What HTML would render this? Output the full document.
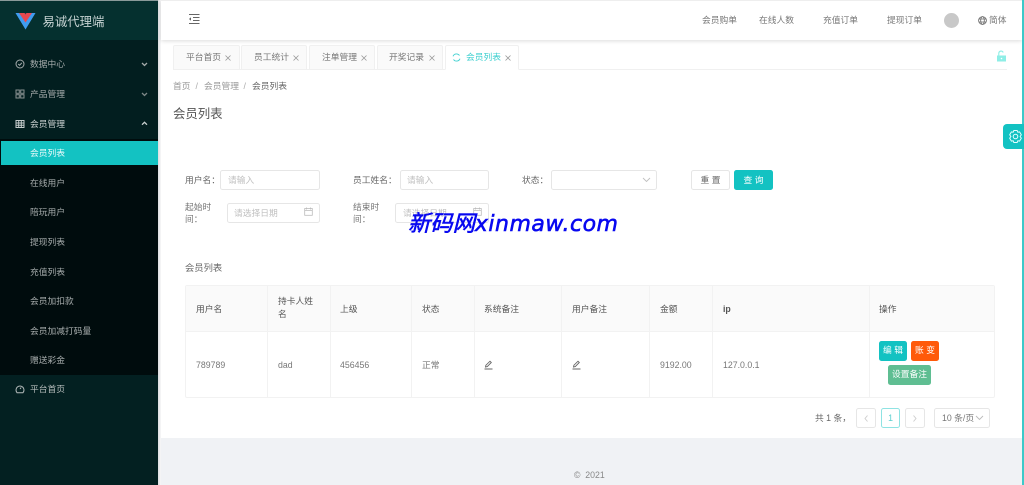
<!DOCTYPE html>
<html lang="zh"><head><meta charset="utf-8"><title>会员列表</title>
<style>
html,body{margin:0;padding:0;width:1024px;height:485px;overflow:hidden;background:#fff}
*{box-sizing:border-box}
body{font-family:"Liberation Sans","Noto Sans CJK SC",sans-serif;font-size:8.75px;color:#666}
#w{position:absolute;left:0;top:0;width:1024px;height:485px;overflow:hidden;filter:blur(.35px)}
#w div,#w svg{position:absolute}
.t{line-height:14px;height:14px;white-space:nowrap}
.m{left:30px;color:#a5abab}
.b{border:1px solid #e6e6e6;border-radius:2.5px;background:#fff}
.p{color:#c0c0c0}
.tab{top:45px;height:25px;background:#fafafa;border:1px solid #f0f0f0;border-bottom:1px solid #f0f0f0;border-radius:2px 2px 0 0}
.th{top:302px;color:#555}
.td{top:358px;color:#777}
.v{width:1px;background:#f2f2f2;top:285px;height:113px}
.btn{border-radius:2.5px;color:#fff;text-align:center;line-height:19px}
.ic{fill:none;stroke:#a5abab;stroke-width:1}
</style></head><body>
<div id="w">
<div style="left:0;top:0;width:158px;height:485px;background:#032021"></div>
<div style="left:0;top:0;width:158px;height:40px;background:#05302f"></div>
<div style="left:0;top:40px;width:158px;height:99px;background:#021e1f"></div>
<div style="left:0;top:139px;width:158px;height:236px;background:#000c0d"></div>
<div style="left:1px;top:141px;width:157px;height:24px;background:#13c2c2"></div>
<div style="left:158px;top:0;width:3px;height:485px;background:linear-gradient(90deg,#dcdde0,#f8f8f9)"></div>
<div style="left:0;top:0;width:158px;height:1px;background:#8a9a9a"></div>

<svg style="left:15px;top:13px" width="21" height="17" viewBox="0 0 21 17"><path d="M.5 0H20.500L10.500 16.500z" fill="#3f9cf0"/><path d="M4 0h13l-6.500 9.500z" fill="#e8484f"/><path d="M9.500 0h2l-1 1.500z" fill="#2b3d55"/></svg>
<div class="t" style="left:42.500px;top:15px;font-size:12.400px;color:#c6d2d2">易诚代理端</div>

<svg class="ic" style="left:15px;top:59px" width="10" height="10" viewBox="0 0 10 10"><circle cx="5" cy="5" r="4"/><path d="M3.200 5l1.400 1.300 2.200-2.500"/></svg>
<div class="t m" style="top:57px">数据中心</div>
<svg class="ic" style="left:140px;top:62px;stroke-width:1.300" width="9" height="5" viewBox="0 0 9 5"><path d="M2 1l2.500 2.500L7 1"/></svg>
<svg class="ic" style="left:15px;top:89px;stroke:#8a9292" width="10" height="10" viewBox="0 0 10 10"><rect x="1" y="1" width="3.300" height="3.300"/><rect x="5.700" y="1" width="3.300" height="3.300"/><rect x="1" y="5.700" width="3.300" height="3.300"/><rect x="5.700" y="5.700" width="3.300" height="3.300"/></svg>
<div class="t m" style="top:87px">产品管理</div>
<svg class="ic" style="left:140px;top:92px;stroke-width:1.300;stroke:#7f8888" width="9" height="5" viewBox="0 0 9 5"><path d="M2 1l2.500 2.500L7 1"/></svg>
<svg class="ic" style="left:15px;top:119px;stroke:#c5cccc" width="10" height="10" viewBox="0 0 10 10"><rect x="1" y="1.500" width="8" height="7"/><path d="M1 4h8M1 6.300h8M3.700 1.500v7M6.300 1.500v7"/></svg>
<div class="t m" style="top:117px;color:#ccd2d2">会员管理</div>
<svg class="ic" style="left:140px;top:121px;stroke-width:1.300;stroke:#ccd2d2" width="9" height="5" viewBox="0 0 9 5"><path d="M2 3.700l2.500-2.400L7 3.700"/></svg>

<div class="t m" style="top:146px;color:#e8fafa">会员列表</div>
<div class="t m" style="top:176px">在线用户</div>
<div class="t m" style="top:205px">陪玩用户</div>
<div class="t m" style="top:235px">提现列表</div>
<div class="t m" style="top:265px">充值列表</div>
<div class="t m" style="top:294px">会员加扣款</div>
<div class="t m" style="top:324px">会员加减打码量</div>
<div class="t m" style="top:353px">赠送彩金</div>
<svg class="ic" style="left:15px;top:384px;stroke:#b5bcbc" width="10" height="10" viewBox="0 0 10 10"><path d="M2 8.700A4 4 0 1 1 8 8.700z"/><path d="M5 5l1.200-1.500"/></svg>
<div class="t m" style="top:382px;color:#b5bbbb">平台首页</div>

<div style="left:161px;top:0;width:861px;height:40px;background:#fff;box-shadow:0 1px 4px rgba(0,0,0,.14)"></div>
<div style="left:161px;top:0;width:861px;height:1px;background:#eee"></div>
<svg style="left:188px;top:13px" width="12" height="12" viewBox="0 0 12 12" fill="none" stroke="#666" stroke-width="1"><path d="M1 1.500h10.500M5 4.500h6.500M5 7.500h6.500M1 10.500h10.500"/><path d="M3 4.300L1 6l2 1.700z" fill="#666" stroke="none"/></svg>

<div class="t" style="left:702px;top:13px;color:#777">会员购单</div>
<div class="t" style="left:759px;top:13px;color:#777">在线人数</div>
<div class="t" style="left:823px;top:13px;color:#777">充值订单</div>
<div class="t" style="left:887px;top:13px;color:#777">提现订单</div>
<div style="left:944px;top:13px;width:15px;height:15px;border-radius:50%;background:#c8c8c8"></div>
<svg style="left:978px;top:16px" width="9" height="9" viewBox="0 0 9 9" fill="none" stroke="#666" stroke-width=".8"><circle cx="4.500" cy="4.500" r="3.900"/><ellipse cx="4.500" cy="4.500" rx="1.800" ry="3.900"/><path d="M.6 3h7.800M.6 6h7.800"/></svg>
<div class="t" style="left:989px;top:13px;color:#777">简体</div>

<div class="tab" style="left:173px;width:67px"></div>
<div class="tab" style="left:241px;width:66px"></div>
<div class="tab" style="left:309px;width:66px"></div>
<div class="tab" style="left:377px;width:66px"></div>
<div style="left:173px;top:69px;width:834px;height:1px;background:#f0f0f0"></div>
<div class="tab" style="left:445px;width:74px;background:#fff;border-bottom-color:#fff"></div>
<div class="t" style="left:186px;top:50px;color:#777">平台首页</div>
<div class="t" style="left:254px;top:50px;color:#777">员工统计</div>
<div class="t" style="left:322px;top:50px;color:#777">注单管理</div>
<div class="t" style="left:389px;top:50px;color:#777">开奖记录</div>
<div class="t" style="left:466px;top:50px;color:#3fd0d0">会员列表</div>
<svg style="left:225px;top:55px" width="6" height="6" viewBox="0 0 6 6" stroke="#999" stroke-width=".8"><path d="M.5.5l5 5M5.500.5l-5 5"/></svg>
<svg style="left:293px;top:55px" width="6" height="6" viewBox="0 0 6 6" stroke="#999" stroke-width=".8"><path d="M.5.5l5 5M5.500.5l-5 5"/></svg>
<svg style="left:361px;top:55px" width="6" height="6" viewBox="0 0 6 6" stroke="#999" stroke-width=".8"><path d="M.5.5l5 5M5.500.5l-5 5"/></svg>
<svg style="left:429px;top:55px" width="6" height="6" viewBox="0 0 6 6" stroke="#999" stroke-width=".8"><path d="M.5.5l5 5M5.500.5l-5 5"/></svg>
<svg style="left:505px;top:55px" width="6" height="6" viewBox="0 0 6 6" stroke="#999" stroke-width=".8"><path d="M.5.5l5 5M5.500.5l-5 5"/></svg>
<svg style="left:452px;top:53px" width="9" height="9" viewBox="0 0 9 9" fill="none" stroke="#3fd0d0" stroke-width=".9"><path d="M1 3.300A3.700 3.700 0 0 1 7.500 2.500M8 5.700A3.700 3.700 0 0 1 1.500 6.500"/></svg>
<svg style="left:996px;top:50px" width="11" height="12" viewBox="0 0 11 12"><rect x="1" y="5.500" width="9" height="6" fill="#8eeee6"/><path d="M2.800 5.500V3a2.300 2.300 0 0 1 4.400-.5" fill="none" stroke="#8eeee6" stroke-width="1.100"/><circle cx="5.500" cy="8.500" r=".8" fill="#fff"/></svg>

<div class="t" style="left:173px;top:79px;color:#999">首页</div>
<div class="t" style="left:195.500px;top:79px;color:#aaa">/</div>
<div class="t" style="left:204px;top:79px;color:#999">会员管理</div>
<div class="t" style="left:243.500px;top:79px;color:#aaa">/</div>
<div class="t" style="left:252px;top:79px;color:#666">会员列表</div>
<div class="t" style="left:173px;top:107px;font-size:12.400px;color:#555">会员列表</div>

<div class="t" style="left:185px;top:173px">用户名：</div>
<div class="b" style="left:220px;top:170px;width:100px;height:20px"></div>
<div class="t p" style="left:228px;top:173px">请输入</div>
<div class="t" style="left:353px;top:173px">员工姓名：</div>
<div class="b" style="left:400px;top:170px;width:89px;height:20px"></div>
<div class="t p" style="left:407px;top:173px">请输入</div>
<div class="t" style="left:522px;top:173px">状态：</div>
<div class="b" style="left:551px;top:170px;width:106px;height:20px"></div>
<svg style="left:642px;top:177px" width="9" height="6" viewBox="0 0 9 6" fill="none" stroke="#c0c0c0" stroke-width=".9"><path d="M1 1l3.500 3.500L8 1"/></svg>
<div class="b btn" style="left:691px;top:170px;width:39px;height:20px;color:#666;line-height:18px">重 置</div>
<div class="btn" style="left:734px;top:170px;width:39px;height:20px;background:#13c2c2;line-height:20px">查 询</div>

<div class="t" style="left:185px;top:200.500px;line-height:12.500px;height:26px;color:#777">起始时<br>间：</div>
<div class="b" style="left:227px;top:203px;width:93px;height:20px"></div>
<div class="t p" style="left:234px;top:206px">请选择日期</div>
<svg style="left:304px;top:207px" width="9" height="9" viewBox="0 0 9 9" fill="none" stroke="#bbb" stroke-width=".8"><rect x=".7" y="1.500" width="7.600" height="6.800"/><path d="M.7 3.500h7.600M2.500.5v2M6.500.5v2"/></svg>
<div class="t" style="left:353px;top:200.500px;line-height:12.500px;height:26px;color:#777">结束时<br>间：</div>
<div class="b" style="left:395px;top:203px;width:94px;height:20px"></div>
<div class="t p" style="left:403px;top:206px">请选择日期</div>
<svg style="left:473px;top:207px" width="9" height="9" viewBox="0 0 9 9" fill="none" stroke="#bbb" stroke-width=".8"><rect x=".7" y="1.500" width="7.600" height="6.800"/><path d="M.7 3.500h7.600M2.500.5v2M6.500.5v2"/></svg>

<div class="t" style="left:185px;top:261px;font-size:9.300px;color:#666">会员列表</div>

<div style="left:185px;top:285px;width:810px;height:113px;border:1px solid #f2f2f2;border-radius:2px"></div>
<div style="left:186px;top:286px;width:808px;height:45px;background:#fafafa"></div>
<div style="left:186px;top:331px;width:808px;height:1px;background:#f2f2f2"></div>
<div class="v" style="left:267px"></div><div class="v" style="left:330px"></div><div class="v" style="left:411px"></div><div class="v" style="left:474px"></div><div class="v" style="left:561px"></div><div class="v" style="left:649px"></div><div class="v" style="left:712px"></div><div class="v" style="left:869px"></div>

<div class="t th" style="left:196px">用户名</div>
<div class="t th" style="left:278px;top:295px;line-height:13px;height:26px">持卡人姓<br>名</div>
<div class="t th" style="left:340px">上级</div>
<div class="t th" style="left:422px">状态</div>
<div class="t th" style="left:484px">系统备注</div>
<div class="t th" style="left:572px">用户备注</div>
<div class="t th" style="left:660px">金额</div>
<div class="t th" style="left:723px;font-weight:bold">ip</div>
<div class="t th" style="left:879px">操作</div>

<div class="t td" style="left:196px">789789</div>
<div class="t td" style="left:278px">dad</div>
<div class="t td" style="left:340px">456456</div>
<div class="t td" style="left:422px">正常</div>
<svg style="left:484px;top:360px" width="9" height="10" viewBox="0 0 9 10" fill="none" stroke="#666" stroke-width=".9"><path d="M1.500 7l.4-1.800L6 1.200l1.300 1.300-4 4.100zM.5 9h8"/></svg>
<svg style="left:572px;top:360px" width="9" height="10" viewBox="0 0 9 10" fill="none" stroke="#666" stroke-width=".9"><path d="M1.500 7l.4-1.800L6 1.200l1.300 1.300-4 4.100zM.5 9h8"/></svg>
<div class="t td" style="left:660px">9192.00</div>
<div class="t td" style="left:723px">127.0.0.1</div>

<div class="btn" style="left:879px;top:341px;width:28px;height:20px;background:#13c2c2">编 辑</div>
<div class="btn" style="left:911px;top:341px;width:28px;height:20px;background:#ff5a0a">账 变</div>
<div class="btn" style="left:888px;top:365px;width:43px;height:20px;background:#5fbe92">设置备注</div>

<div class="t" style="left:815px;top:411px">共 1 条，</div>
<div class="b" style="left:856px;top:408px;width:20px;height:20px"></div>
<svg style="left:863px;top:414px" width="6" height="9" viewBox="0 0 6 9" fill="none" stroke="#ccc" stroke-width=".9"><path d="M4.500 1.500L2 4.500 4.500 7.500"/></svg>
<div class="b" style="left:881px;top:408px;width:19px;height:20px;border-color:#8fe3e3;color:#5ccfcf;text-align:center;line-height:18px">1</div>
<div class="b" style="left:905px;top:408px;width:20px;height:20px"></div>
<svg style="left:912px;top:414px" width="6" height="9" viewBox="0 0 6 9" fill="none" stroke="#ccc" stroke-width=".9"><path d="M1.500 1.500L4 4.500 1.500 7.500"/></svg>
<div class="b" style="left:934px;top:408px;width:56px;height:20px"></div>
<div class="t" style="left:942px;top:411px;color:#777">10 条/页</div>
<svg style="left:975px;top:415px" width="9" height="6" viewBox="0 0 9 6" fill="none" stroke="#bbb" stroke-width=".9"><path d="M1 1l3.500 3.500L8 1"/></svg>

<div style="left:161px;top:438px;width:861px;height:47px;background:#f0f2f5"></div>
<div class="t" style="left:574px;top:468px;color:#888">©&nbsp;&nbsp;2021</div>

<div style="left:1022px;top:0;width:2px;height:485px;background:#3cc9c9"></div>
<div style="left:1003px;top:124px;width:21px;height:25px;background:#13c2c2;border-radius:4px 0 0 4px"></div>
<svg style="left:1008px;top:129px" width="15" height="15" viewBox="0 0 15 15" fill="none" stroke="#e4ffff" stroke-width="1"><path d="M5.800 1.500h3.400l.6 1.700 1.800-.3 1.700 2.900-1.200 1.700 1.200 1.700-1.700 2.900-1.800-.3-.6 1.700H5.800l-.6-1.700-1.800.3-1.700-2.900 1.200-1.700-1.200-1.700 1.700-2.900 1.800.3z" stroke-linejoin="round"/><circle cx="7.500" cy="7.500" r="2.300"/></svg>
</div>
<div class="t" style="position:absolute;left:408px;top:210px;height:28px;line-height:28px;font-size:22.300px;font-style:italic;color:#0808f0;white-space:nowrap;font-family:'DejaVu Sans','Noto Sans CJK SC',sans-serif;-webkit-text-stroke:.6px #0808f0">新码网<span style="font-size:22px;letter-spacing:.5px">xinmaw.com</span></div>
</body></html>
